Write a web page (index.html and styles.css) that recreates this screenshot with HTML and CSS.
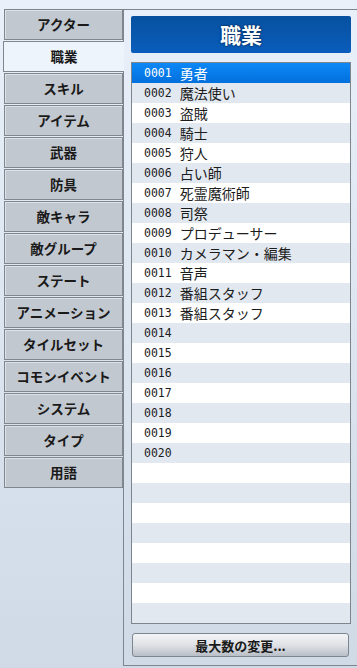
FILE: index.html
```html
<!DOCTYPE html>
<html lang="ja">
<head>
  <meta charset="UTF-8" />
  <title>データベース - 職業</title>
  <link rel="stylesheet" href="styles.css">
</head>
<body>
  <div class="app">
    <div class="tabs">
      <div class="tab">アクター</div>
      <div class="tab active">職業</div>
      <div class="tab">スキル</div>
      <div class="tab">アイテム</div>
      <div class="tab">武器</div>
      <div class="tab">防具</div>
      <div class="tab">敵キャラ</div>
      <div class="tab">敵グループ</div>
      <div class="tab">ステート</div>
      <div class="tab">アニメーション</div>
      <div class="tab">タイルセット</div>
      <div class="tab">コモンイベント</div>
      <div class="tab">システム</div>
      <div class="tab">タイプ</div>
      <div class="tab">用語</div>
    </div>

    <div class="panel">
      <div class="panel-title">職業</div>
      <div class="list">
        <div class="row selected"><span class="num">0001</span><span class="name">勇者</span></div>
        <div class="row"><span class="num">0002</span><span class="name">魔法使い</span></div>
        <div class="row"><span class="num">0003</span><span class="name">盗賊</span></div>
        <div class="row"><span class="num">0004</span><span class="name">騎士</span></div>
        <div class="row"><span class="num">0005</span><span class="name">狩人</span></div>
        <div class="row"><span class="num">0006</span><span class="name">占い師</span></div>
        <div class="row"><span class="num">0007</span><span class="name">死霊魔術師</span></div>
        <div class="row"><span class="num">0008</span><span class="name">司祭</span></div>
        <div class="row"><span class="num">0009</span><span class="name">プロデューサー</span></div>
        <div class="row"><span class="num">0010</span><span class="name">カメラマン・編集</span></div>
        <div class="row"><span class="num">0011</span><span class="name">音声</span></div>
        <div class="row"><span class="num">0012</span><span class="name">番組スタッフ</span></div>
        <div class="row"><span class="num">0013</span><span class="name">番組スタッフ</span></div>
        <div class="row"><span class="num">0014</span></div>
        <div class="row"><span class="num">0015</span></div>
        <div class="row"><span class="num">0016</span></div>
        <div class="row"><span class="num">0017</span></div>
        <div class="row"><span class="num">0018</span></div>
        <div class="row"><span class="num">0019</span></div>
        <div class="row"><span class="num">0020</span></div>
        <div class="row"></div>
        <div class="row"></div>
        <div class="row"></div>
        <div class="row"></div>
        <div class="row"></div>
        <div class="row"></div>
        <div class="row"></div>
        <div class="row"></div>
      </div>
      <button class="max-btn">最大数の変更...</button>
    </div>
  </div>
</body>
</html>
```

FILE: styles.css
```css
body {
  margin: 0;
  height: 668px;
  overflow: hidden;
  font-family: "Noto Sans CJK JP", "Noto Sans", sans-serif;
  color: #1c1c1c;
  background: linear-gradient(180deg, #e9f0fa 0%, #dce5f0 50%, #cfdae6 100%);
}

.app {
  display: flex;
  padding-top: 9px;
}

/* left tab column */
.tabs {
  flex-shrink: 0;
  width: 119px;
  margin-left: 4px;
  display: flex;
  flex-direction: column;
}

.tab {
  box-sizing: border-box;
  height: 31px;
  margin-bottom: 1px;
  border: 1px solid #80868e;
  box-shadow: inset 1px 1px 0 #dde2e7;
  background: #c2c8cf;
  font-size: 13.5px;
  font-weight: 700;
  line-height: 29px;
  text-align: center;
  color: #1a1a1a;
}

.tab.active {
  position: relative;
  z-index: 1;
  margin-left: -1px;
  margin-right: -1px;
  border-right: none;
  box-shadow: none;
  background: #eef4fc;
}

/* right panel */
.panel {
  flex-shrink: 0;
  box-sizing: border-box;
  height: 657px;
  width: 240px;
  border: 1px solid #7f858d;
  padding: 6px 0 8px 7px;
  display: flex;
  flex-direction: column;
}

.panel-title {
  box-sizing: border-box;
  width: 220px;
  height: 37px;
  border-radius: 2px;
  background: linear-gradient(180deg, #07519f 0%, #0a5dbc 100%);
  color: #fff;
  font-size: 21px;
  font-weight: 700;
  line-height: 37px;
  text-align: center;
  text-shadow: 0 0 2px #002a5c, 0 0 2px #002a5c;
}

.list {
  margin-top: 9px;
  width: 220px;
  box-sizing: border-box;
  border: 1px solid #7f858d;
  background: #fff;
}

.row {
  height: 20px;
  display: flex;
  align-items: center;
  gap: 8px;
  padding-left: 12px;
  background: #fff;
}

.row:nth-child(even) {
  background: #e2e8f0;
}

.row.selected {
  background: linear-gradient(180deg, #0d88f6 0%, #0270dd 100%);
  color: #fff;
}

.num {
  font-family: "DejaVu Sans Mono", monospace;
  font-size: 11.5px;
  color: inherit;
}

.name {
  font-size: 14px;
  line-height: 20px;
}

.max-btn {
  margin: 9px 0 0 1px;
  width: 217px;
  height: 24px;
  border: 1px solid #7f858d;
  border-radius: 3px;
  background: linear-gradient(180deg, #f3f4f6 0%, #dfe2e6 50%, #b9bfc7 100%);
  font-family: "Noto Sans CJK JP", "Noto Sans", sans-serif;
  font-size: 13px;
  font-weight: 700;
  color: #1a1a1a;
  padding: 0;
}
```
